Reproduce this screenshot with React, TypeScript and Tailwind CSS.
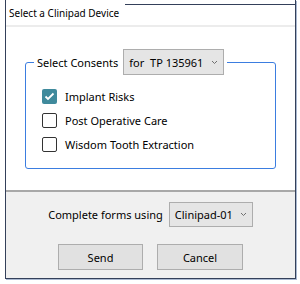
import React from "react";

function Chevron() {
  return (
    <svg width="7" height="5" viewBox="0 0 7 5" className="shrink-0">
      <polyline points="1,1 3.5,3.5 6,1" fill="none" stroke="#707070" strokeWidth="1" />
    </svg>
  );
}

function Check({ checked, label }: { checked?: boolean; label: string }) {
  return (
    <div className="h-[24px] flex items-center">
      {checked ? (
        <div className="w-[15px] h-[15px] rounded-[2px] bg-[#3f8a9c] flex items-center justify-center">
          <svg width="11" height="9" viewBox="0 0 11 9">
            <polyline points="1.5,4.5 4,7 9.5,1.5" fill="none" stroke="white" strokeWidth="1.8" />
          </svg>
        </div>
      ) : (
        <div className="w-[15px] h-[15px] rounded-[2px] border border-[#333333] bg-white" />
      )}
      <span className="ml-[8px]">{label}</span>
    </div>
  );
}

export default function App() {
  return (
    <div className="w-[300px] h-[284px] bg-white relative overflow-hidden font-['Noto_Sans',sans-serif] text-[11px] text-black leading-none">
      <div className="absolute left-[125px] top-[4px] w-[171px] h-px bg-[#34405a]" />
      <div className="ml-[5px] w-[291px] h-[279px] border-x border-b border-[#34405a] flex flex-col shadow-[1px_1px_0_#a9b8d0]">
        <div className="h-[25px] pl-[3px] flex items-center text-[10px]">Select a Clinipad Device</div>
        <div className="h-[2px] bg-[#ececec]" />
        <div className="h-[163px] bg-white pt-[22px] px-[19px]">
          <fieldset className="border border-[#3b7de0] rounded-[3px]">
            <legend className="ml-[8px] px-[3px]">
              <div className="flex items-center">
                <span>Select Consents</span>
                <div className="ml-[5px] w-[101px] h-[26px] border border-[#adadad] bg-[#e5e5e5] flex items-center pl-[5px] pr-[5px]">
                  <span className="whitespace-pre flex-1">for  TP 135961</span>
                  <Chevron />
                </div>
              </div>
            </legend>
            <div className="pl-[16px] pt-[9px] pb-[12px]">
              <Check checked label="Implant Risks" />
              <Check label="Post Operative Care" />
              <Check label="Wisdom Tooth Extraction" />
            </div>
          </fieldset>
        </div>
        <div className="h-[2px] bg-[#a8a8a8]" />
        <div className="h-[86px] bg-[#f0f0f0] pt-[10px] flex flex-col items-center">
          <div className="flex items-center">
            <span>Complete forms using</span>
            <div className="ml-[6px] w-[84px] h-[25px] border border-[#adadad] bg-[#e5e5e5] flex items-center pl-[5px] pr-[5px]">
              <span className="flex-1">Clinipad-01</span>
              <Chevron />
            </div>
          </div>
          <div className="mt-[17px] flex gap-[14px]">
            <div className="w-[85px] h-[26px] border border-[#adadad] bg-[#e1e1e1] flex items-center justify-center">Send</div>
            <div className="w-[86px] h-[26px] border border-[#adadad] bg-[#e1e1e1] flex items-center justify-center">Cancel</div>
          </div>
        </div>
      </div>
    </div>
  );
}
